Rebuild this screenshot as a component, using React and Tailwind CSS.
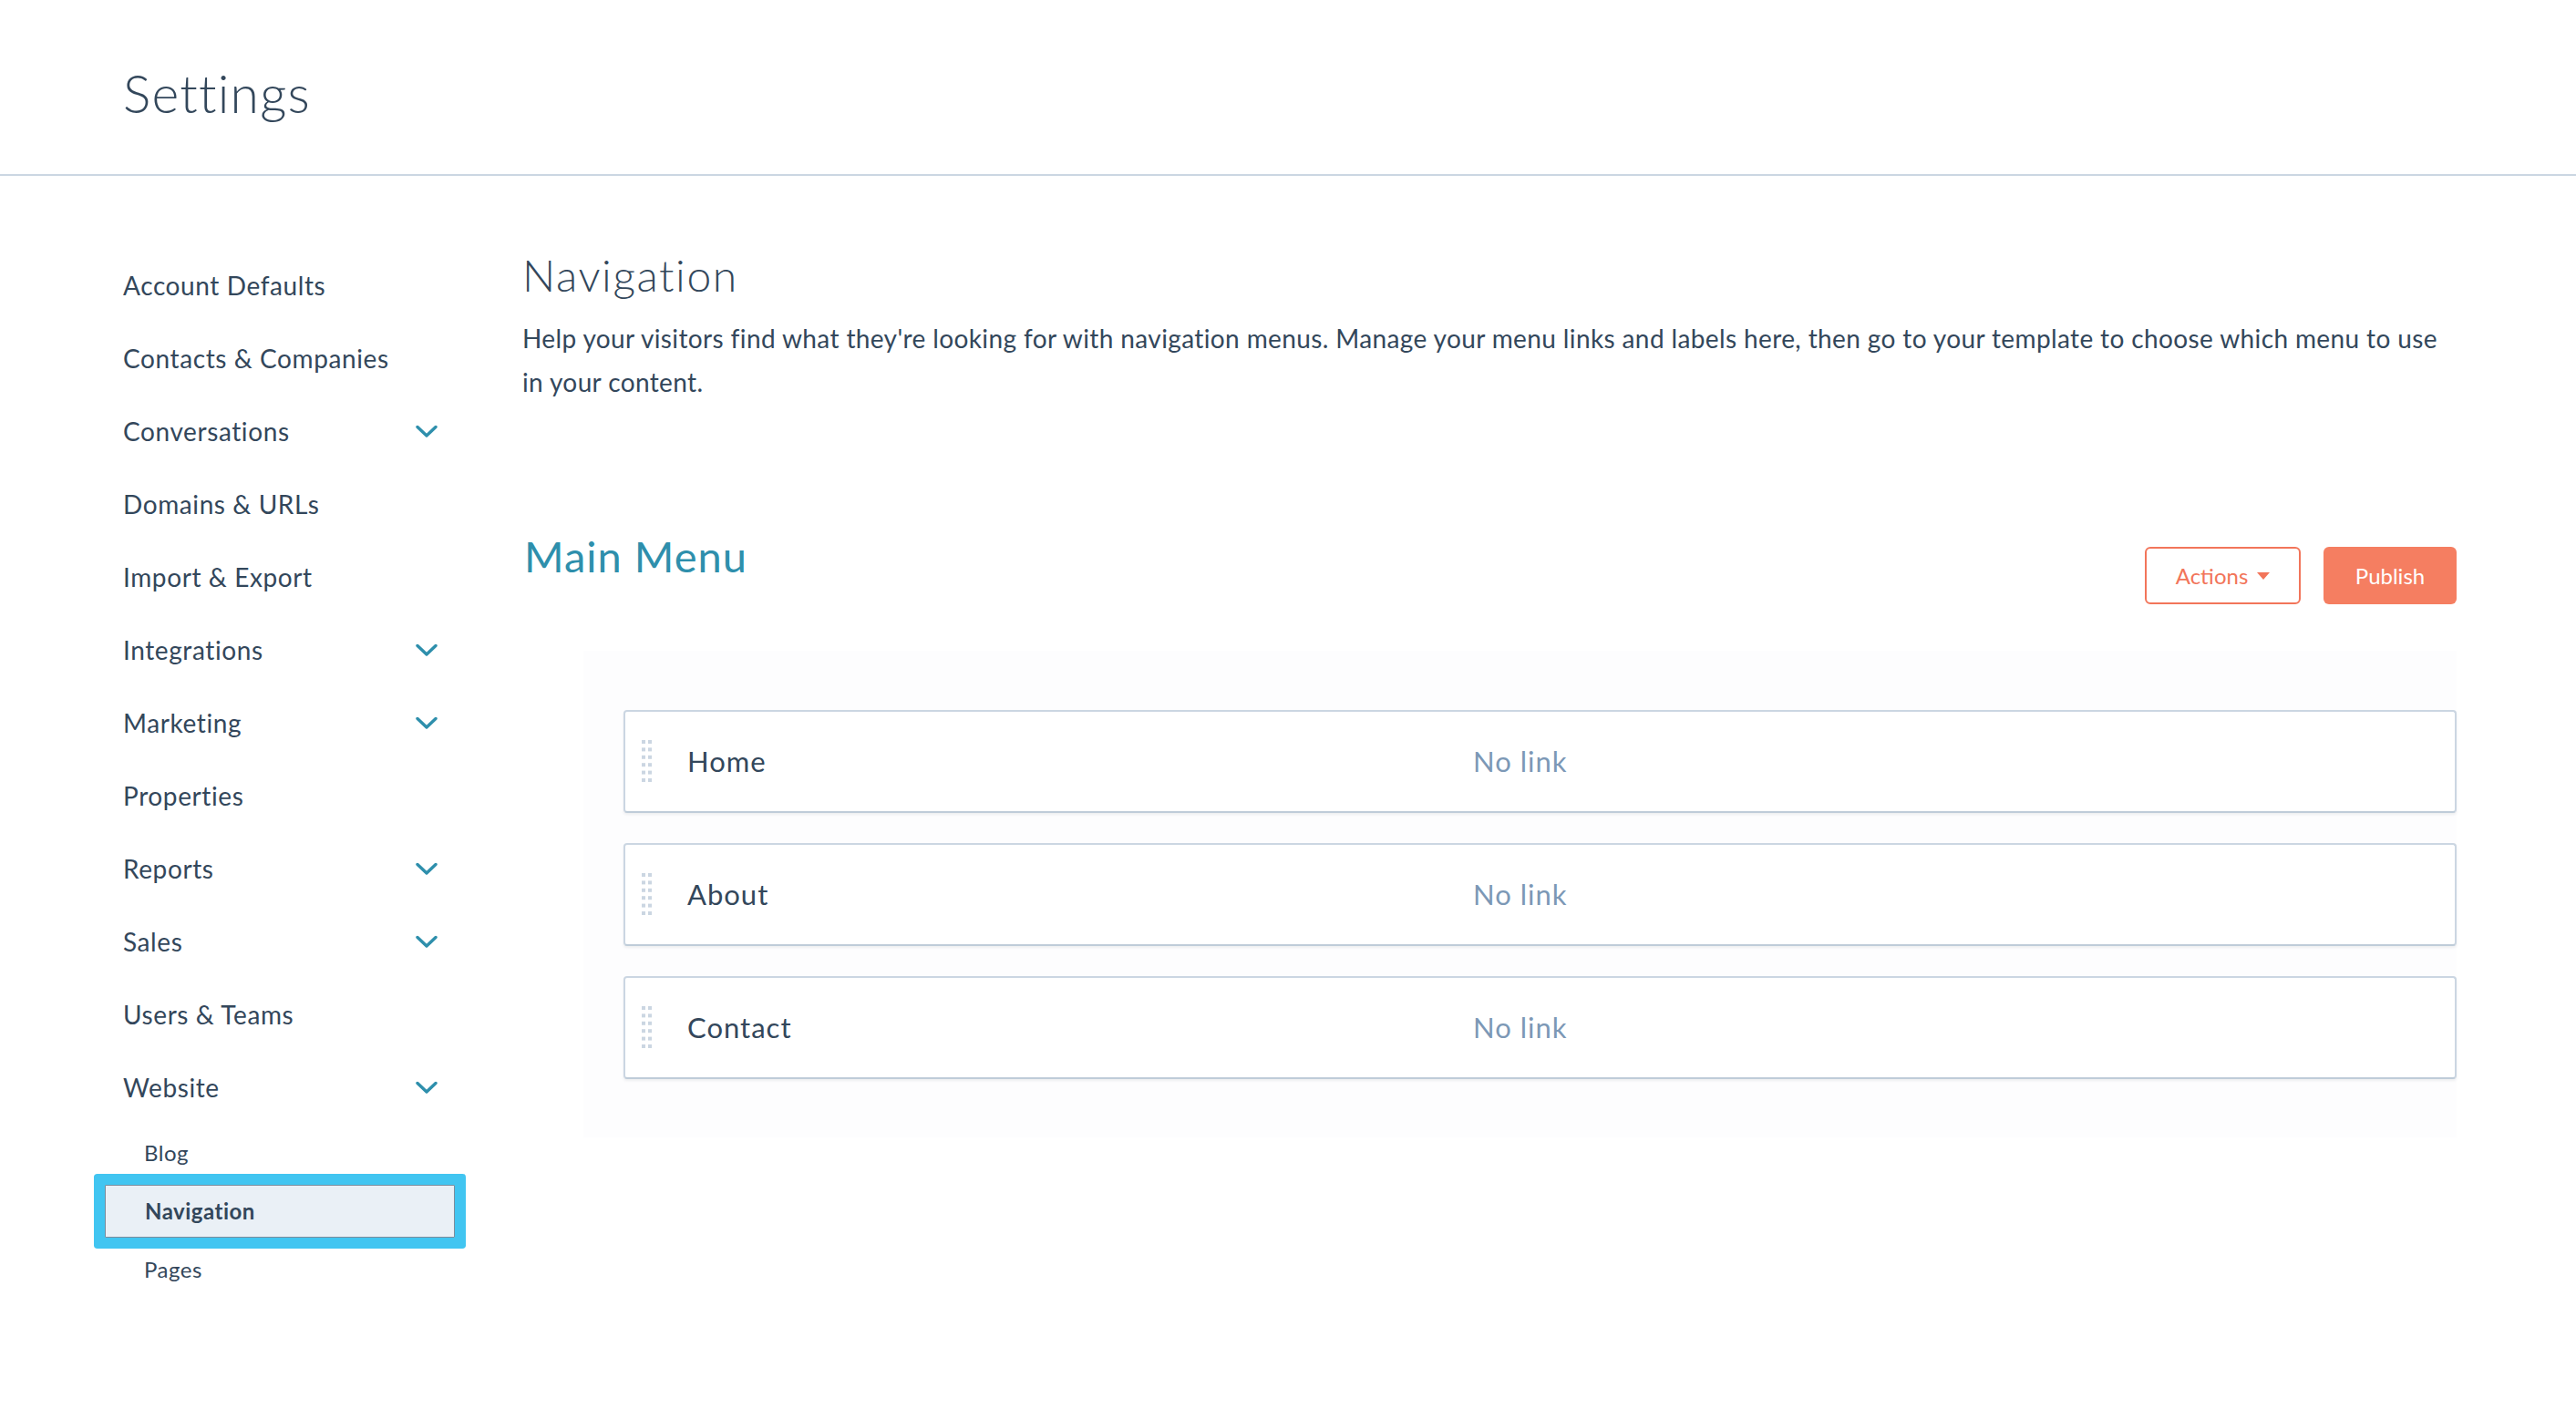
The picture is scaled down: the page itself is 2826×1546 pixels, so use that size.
import { useState } from "react";

const sections = [
  { label: "Account Defaults" },
  { label: "Contacts & Companies" },
  { label: "Conversations", expandable: true },
  { label: "Domains & URLs" },
  { label: "Import & Export" },
  { label: "Integrations", expandable: true },
  { label: "Marketing", expandable: true },
  { label: "Properties" },
  { label: "Reports", expandable: true },
  { label: "Sales", expandable: true },
  { label: "Users & Teams" },
  { label: "Website", expandable: true },
];

const websiteLinks = ["Blog", "Navigation", "Pages"];

const menuItems = [
  { id: 1, label: "Home", link: null },
  { id: 2, label: "About", link: null },
  { id: 3, label: "Contact", link: null },
];

function Chevron() {
  return (
    <svg width="24" height="15" viewBox="0 0 24 15" fill="none">
      <path
        d="M2 2.5 L12 12 L22 2.5"
        stroke="#2e8fac"
        strokeWidth="3.4"
        strokeLinecap="round"
        strokeLinejoin="round"
      />
    </svg>
  );
}

function DragHandle() {
  const rows = [0, 1, 2, 3, 4, 5];
  return (
    <svg width="12" height="48" viewBox="0 0 12 48">
      {rows.map((r) => (
        <g key={r} fill="#cbd6e2">
          <rect x="0" y={r * 8.4} width="4" height="4" />
          <rect x="7" y={r * 8.4} width="4" height="4" />
        </g>
      ))}
    </svg>
  );
}

export default function App() {
  const [active, setActive] = useState("Navigation");

  return (
    <div className="min-h-screen bg-white text-[#33475b] font-['Lato',sans-serif]">
      {/* Header */}
      <header className="h-[193px] border-b-2 border-[#cbd6e2] pl-[135px] pt-[74px]">
        <h1 className="text-[57px] leading-none font-light tracking-[1.2px]">Settings</h1>
      </header>

      <div className="flex pl-[135px] pr-[131px]">
        {/* Sidebar */}
        <aside className="w-[348px] shrink-0 pt-[80px]">
          {sections.map((s) => (
            <div
              key={s.label}
              className="h-[80px] flex items-center justify-between pr-[3px] text-[28px] tracking-[0.6px]"
            >
              <span>{s.label}</span>
              {s.expandable && <Chevron />}
            </div>
          ))}

          <div className="pb-10">
            {websiteLinks.map((item) =>
              item === active ? (
                <div
                  key={item}
                  className="-ml-[20px] my-[3px] w-[384px] h-[58px] flex items-center pl-[43px] bg-[#eaf0f6] border border-[#7b8c9c] rounded-[1px] ring-[12px] ring-[#41c5f1] text-[24px] font-bold tracking-[0.5px]"
                >
                  {item}
                </div>
              ) : (
                <div
                  key={item}
                  onClick={() => setActive(item)}
                  className="h-[64px] flex items-center pl-[23px] text-[24px] tracking-[0.5px] cursor-pointer"
                >
                  {item}
                </div>
              )
            )}
          </div>
        </aside>

        {/* Main content */}
        <main className="ml-[90px] flex-1 pt-[85px]">
          <h2 className="text-[48px] leading-none font-light tracking-[1.6px]">Navigation</h2>
          <p className="mt-[21px] text-[28px] leading-[48px] tracking-[0.38px]">
            <span className="whitespace-nowrap">
              Help your visitors find what they're looking for with navigation menus. Manage your menu links and labels here, then go to your template to choose which menu to use
            </span>
            <br />
            in your content.
          </p>

          <div className="mt-[144px] flex justify-between items-start">
            <h3 className="text-[47px] leading-none text-[#2e8fac] pl-[2px] tracking-[1px]">Main Menu</h3>
            <div className="mt-[13px] flex gap-[25px]">
              <button className="w-[171px] h-[63px] border-2 border-[#f2755a] rounded-[6px] text-[24px] text-[#f2755a] flex items-center justify-center gap-[10px]">
                Actions
                <svg width="14" height="8" viewBox="0 0 14 8">
                  <path d="M0 0 H14 L7 8 Z" fill="#f2755a" />
                </svg>
              </button>
              <button className="w-[146px] h-[63px] bg-[#f57e61] rounded-[6px] text-[24px] text-white">
                Publish
              </button>
            </div>
          </div>

          {/* Menu items */}
          <div className="mt-[51px] ml-[67px] bg-[#fdfdfe] pt-[65px] pb-[64px] pl-[44px]">
            <div className="flex flex-col gap-[33px]">
              {menuItems.map((item) => (
                <div
                  key={item.id}
                  className="h-[113px] flex items-center bg-white border-2 border-[#cbd6e2] border-b-[#bfccd9] rounded-[4px] shadow-[0_2px_3px_rgba(45,62,80,0.08)]"
                >
                  <div className="ml-[18px]">
                    <DragHandle />
                  </div>
                  <span className="ml-[38px] w-[862px] text-[31px] tracking-[1px] text-[#33475b]">
                    {item.label}
                  </span>
                  <span className="text-[31px] tracking-[1px] text-[#7c98b6]">
                    {item.link || "No link"}
                  </span>
                </div>
              ))}
            </div>
          </div>
        </main>
      </div>
    </div>
  );
}
